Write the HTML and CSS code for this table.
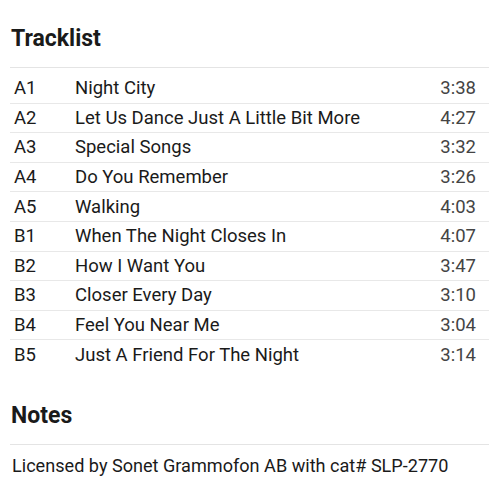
FILE: index.html
```html
<!DOCTYPE html>
<html>
<head>
<meta charset="utf-8">
<link rel="stylesheet" href="styles.css">
</head>
<body>
<section class="block tracklist">
  <h2 class="heading">Tracklist</h2>
  <div class="rows">
    <div class="row"><span class="pos">A1</span><span class="title">Night City</span><span class="dur">3:38</span></div>
    <div class="row"><span class="pos">A2</span><span class="title">Let Us Dance Just A Little Bit More</span><span class="dur">4:27</span></div>
    <div class="row"><span class="pos">A3</span><span class="title">Special Songs</span><span class="dur">3:32</span></div>
    <div class="row"><span class="pos">A4</span><span class="title">Do You Remember</span><span class="dur">3:26</span></div>
    <div class="row"><span class="pos">A5</span><span class="title">Walking</span><span class="dur">4:03</span></div>
    <div class="row"><span class="pos">B1</span><span class="title">When The Night Closes In</span><span class="dur">4:07</span></div>
    <div class="row"><span class="pos">B2</span><span class="title">How I Want You</span><span class="dur">3:47</span></div>
    <div class="row"><span class="pos">B3</span><span class="title">Closer Every Day</span><span class="dur">3:10</span></div>
    <div class="row"><span class="pos">B4</span><span class="title">Feel You Near Me</span><span class="dur">3:04</span></div>
    <div class="row"><span class="pos">B5</span><span class="title">Just A Friend For The Night</span><span class="dur">3:14</span></div>
  </div>
</section>
<section class="block notes">
  <h2 class="heading">Notes</h2>
  <p class="note-text">Licensed by Sonet Grammofon AB with cat# SLP-2770</p>
</section>
</body>
</html>
```
FILE: styles.css
```css
html, body {
  margin: 0;
  padding: 0;
  background: #ffffff;
}
body {
  font-family: Roboto, "Noto Sans", sans-serif;
  color: #1a1a1a;
  padding: 0 11px 0 10px;
}
.heading {
  margin: 0;
  font-size: 23px;
  font-weight: 700;
  line-height: 28px;
  padding: 0 0 14px 1px;
  border-bottom: 1px solid #e4e4e4;
}
.tracklist {
  padding-top: 25px;
}
.rows {
  margin-top: 6px;
}
.row {
  display: grid;
  grid-template-columns: 61px 1fr auto;
  align-items: center;
  height: 28.6px;
  padding: 0 13px 0 4px;
  font-size: 18.5px;
  border-bottom: 1px solid #e8e8e8;
}
.row:last-child {
  border-bottom: none;
  height: 29.6px;
}
.dur {
  color: #444444;
}
.notes {
  padding-top: 32px;
}
.note-text {
  margin: 0;
  padding: 7px 0 0 2px;
  font-size: 18.1px;
  line-height: 28px;
}
```
